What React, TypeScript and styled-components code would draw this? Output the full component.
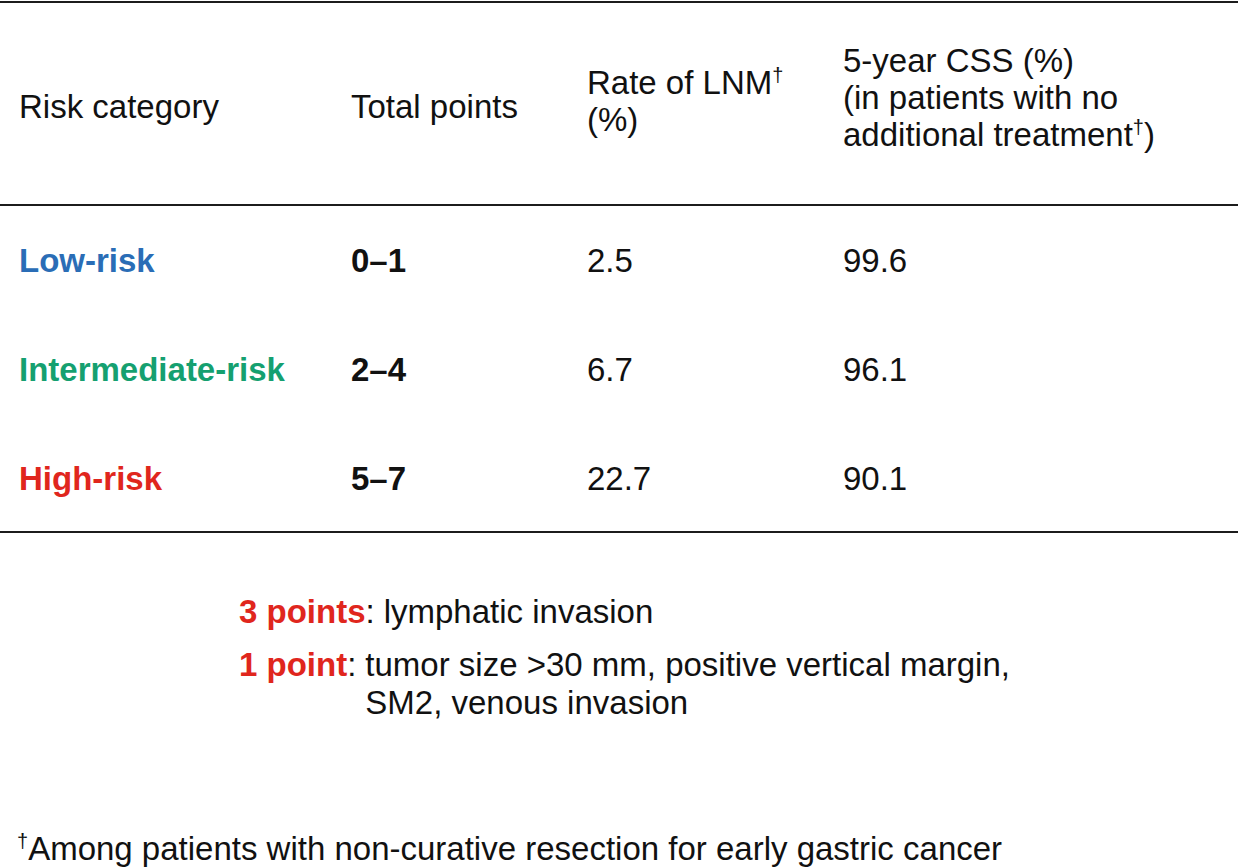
import styled, { createGlobalStyle } from 'styled-components';

const GlobalStyle = createGlobalStyle`
  html, body { margin: 0; padding: 0; background: #ffffff; }
  body {
    font-family: "Liberation Sans", Arial, Helvetica, sans-serif;
    color: #111111;
  }
`;

const COLS = '332px 236px 256px 1fr';
const RULE = '2px solid #1c1c1c';

const Page = styled.div`
  width: 1238px;
  height: 867px;
  box-sizing: border-box;
  padding-top: 1px;
  overflow: hidden;
  font-size: 33px;
`;

// Tabla principal
const Table = styled.div`
  border-top: ${RULE};
  border-bottom: ${RULE};
`;

const HeadRow = styled.div`
  display: grid;
  grid-template-columns: ${COLS};
  align-items: start;
  height: 201px;
  padding-left: 19px;
  border-bottom: ${RULE};
`;

const HeadCell = styled.div<{ $top: number }>`
  padding-top: ${p => p.$top}px;
  line-height: 37px;
`;

const Sup = styled.sup`
  font-size: 20px;
  line-height: 0;
  vertical-align: 12px;
`;

const BodyRows = styled.div`
  display: grid;
  row-gap: 72px;
  padding: 36px 0 34px 19px;
`;

const Row = styled.div`
  display: grid;
  grid-template-columns: ${COLS};
  line-height: 37px;
`;

const Category = styled.div<{ $tone: string }>`
  font-weight: 700;
  color: ${p => p.$tone};
`;

const Points = styled.div`
  font-weight: 700;
`;

const Value = styled.div``;

// Notas de puntuación
const Notes = styled.div`
  display: flex;
  flex-direction: column;
  gap: 15px;
  margin-top: 60px;
  padding-left: 239px;
  line-height: 38px;
`;

const NoteRow = styled.div`
  display: flex;
  align-items: flex-start;
`;

const NoteKey = styled.span`
  white-space: nowrap;
`;

const KeyText = styled.b`
  color: #e0261d;
  font-weight: 700;
`;

const NoteText = styled.span`
  margin-left: 9px;
`;

const Footnote = styled.div`
  margin-top: 108px;
  padding-left: 17px;
  line-height: 37px;
  white-space: nowrap;
`;

const rows = [
  { label: 'Low-risk', tone: '#2a6db6', points: '0–1', lnm: '2.5', css: '99.6' },
  { label: 'Intermediate-risk', tone: '#15a070', points: '2–4', lnm: '6.7', css: '96.1' },
  { label: 'High-risk', tone: '#e0261d', points: '5–7', lnm: '22.7', css: '90.1' },
];

export default function App() {
  return (
    <Page>
      <GlobalStyle />
      <Table>
        <HeadRow>
          <HeadCell $top={85}>Risk category</HeadCell>
          <HeadCell $top={85}>Total points</HeadCell>
          <HeadCell $top={61}>
            Rate of LNM<Sup>†</Sup>
            <br />(%)
          </HeadCell>
          <HeadCell $top={39}>
            5-year CSS (%)
            <br />(in patients with no
            <br />additional treatment<Sup>†</Sup>)
          </HeadCell>
        </HeadRow>
        <BodyRows>
          {rows.map(r => (
            <Row key={r.label}>
              <Category $tone={r.tone}>{r.label}</Category>
              <Points>{r.points}</Points>
              <Value>{r.lnm}</Value>
              <Value>{r.css}</Value>
            </Row>
          ))}
        </BodyRows>
      </Table>

      <Notes>
        <NoteRow>
          <NoteKey><KeyText>3 points</KeyText>:</NoteKey>
          <NoteText>lymphatic invasion</NoteText>
        </NoteRow>
        <NoteRow>
          <NoteKey><KeyText>1 point</KeyText>:</NoteKey>
          <NoteText>
            tumor size &gt;30 mm, positive vertical margin,
            <br />SM2, venous invasion
          </NoteText>
        </NoteRow>
      </Notes>

      <Footnote>
        <Sup>†</Sup>Among patients with non-curative resection for early gastric cancer
      </Footnote>
    </Page>
  );
}
